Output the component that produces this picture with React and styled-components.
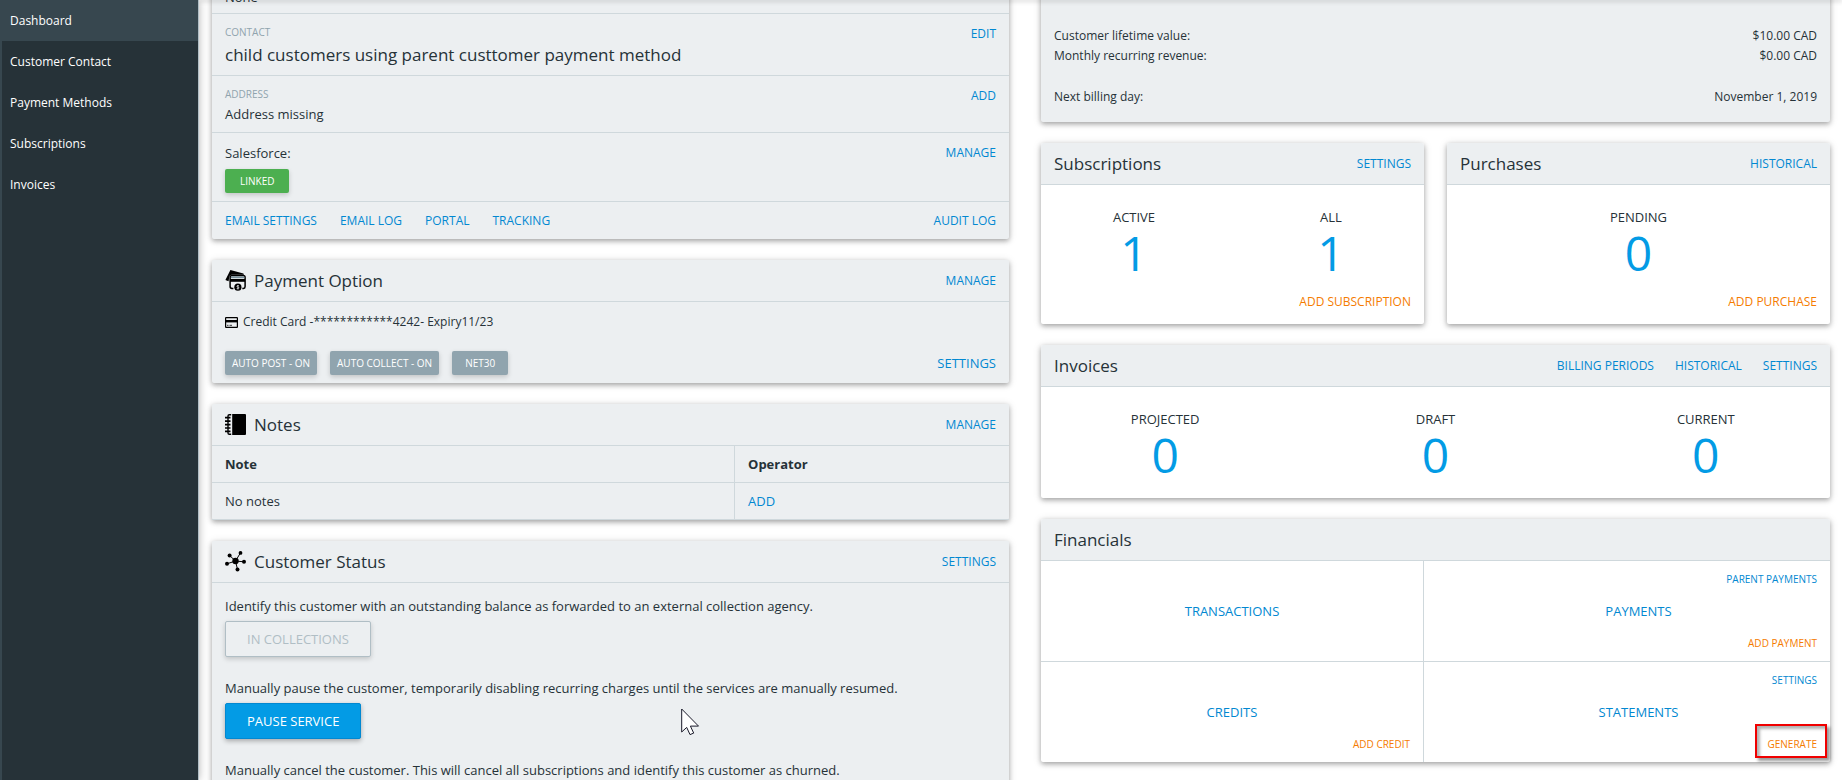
import React from 'react';
import styled, { createGlobalStyle } from 'styled-components';


const menu = ['Dashboard', 'Customer Contact', 'Payment Methods', 'Subscriptions', 'Invoices'];

const summary = [
    [
        { label: 'Customer lifetime value:', value: '$10.00 CAD' },
        { label: 'Monthly recurring revenue:', value: '$0.00 CAD' }
    ],
    [
        { label: 'Next billing day:', value: 'November 1, 2019' }
    ]
];

const invoiceStats = [
    { label: 'PROJECTED', value: 0 },
    { label: 'DRAFT', value: 0 },
    { label: 'CURRENT', value: 0 }
];

const PaymentIcon = () => (
    <HeaderIcon viewBox="0 0 21 21" aria-hidden="true">
        <path d="M5.4 0 18.4 3.6l.6 1.2H6.6Q4.400 5 4.200 7.200L3.600 11.200 2.200 10.800.4 10z" fill="#000" />
        <path d="M7 5.600h11.200q1.900 0 1.900 1.900v9q0 1.800-1.600 1.900h-1.200M8.400 18.400H7q-1.900 0-1.900-1.900v-9q0-1.900 1.900-1.900" fill="none" stroke="#000" strokeWidth="1.500" />
        <path d="M6 6.400h13.300v1.800H6z" fill="#78909c" />
        <path d="M5 9h15v2.800H5z" fill="#000" />
        <circle cx="12.900" cy="17.200" r="3.600" fill="#000" />
        <path d="M14 15.800q-2.400-.6-2.200.5.2.7 1.100.8 1.200.2 1.200 1-.2 1-2.400.5M12.900 15v4.400" fill="none" stroke="#eceff1" strokeWidth=".7" />
    </HeaderIcon>
)

const NotesIcon = () => (
    <HeaderIcon viewBox="0 0 21 21" aria-hidden="true">
        <path d="M7.200 0H20q1 0 1 1v19q0 1-1 1H7.200z" fill="#000" />
        <path d="M6.200.7H4.300Q3 .7 3 2v17q0 1.300 1.300 1.300h1.900" fill="none" stroke="#000" strokeWidth="1.400" />
        <path d="M0 3.700h5.500M0 7.200h5.500M0 10.600h5.500M0 14h5.500M0 17.400h5.500" stroke="#000" strokeWidth="1.700" />
    </HeaderIcon>
)

const StatusIcon = () => (
    <HeaderIcon viewBox="0 0 21 21" aria-hidden="true">
        <path d="M10.500 10 4.600 4.500M10.500 10l4.900-8M10.500 10l8.500.8M10.500 10l2 8.500M10.500 10 2 12.800" stroke="#000" strokeWidth="1" />
        <circle cx="10.500" cy="10" r="3.200" />
        <circle cx="4.600" cy="4.500" r="2" />
        <circle cx="15.500" cy="1.900" r="1.900" />
        <circle cx="19" cy="10.700" r="2" />
        <circle cx="12.500" cy="18.400" r="2" />
        <circle cx="2" cy="12.800" r="2" />
    </HeaderIcon>
)

const CardIcon = () => (
    <SmallIcon viewBox="0 0 13 11" aria-hidden="true">
        <rect x=".6" y=".6" width="11.800" height="9.800" rx=".5" fill="none" stroke="#000" strokeWidth="1.200" />
        <path d="M0 3h13v2.400H0z" />
        <path d="M2 8.300h1.500M4.500 8.300h2.500" stroke="#000" strokeWidth=".8" />
    </SmallIcon>
)

const CardHeader = ({ icon, title, links = [] }) => (
    <Header>
        {icon}
        <Title>{title}</Title>
        <Links>
            {links.map(link => <Link href="#" key={link}>{link}</Link>)}
        </Links>
    </Header>
)

const Stat = ({ label, value }) => (
    <StatBox>
        <StatLabel>{label}</StatLabel>
        <StatValue>{value}</StatValue>
    </StatBox>
)

const FinancialCell = ({ name, top, action, marked }) => (
    <Cell>
        <CellLine $align="flex-end">{top && <SmallLink href="#">{top}</SmallLink>}</CellLine>
        <CellLine $align="center"><BigLink href="#">{name}</BigLink></CellLine>
        <CellLine $align="flex-end">
            {action &&
                <ActionWrap>
                    <SmallLink href="#" $accent>{action}</SmallLink>
                    {marked && <Marker />}
                </ActionWrap>
            }
        </CellLine>
    </Cell>
)

const App = () => {
    return (
        <Page>
            <GlobalStyle />
            <Sidebar>
                {menu.map((item, i) => (
                    <MenuItem href="#" key={item} $active={i === 0}>{item}</MenuItem>
                ))}
            </Sidebar>
            <Main>
                <TopShade />
                <Columns>
                    <Column>
                        <Card>
                            <FirstRow>None</FirstRow>
                            <Row>
                                <div>
                                    <Label>CONTACT</Label>
                                    <ContactName>child customers using parent custtomer payment method</ContactName>
                                </div>
                                <Link href="#">EDIT</Link>
                            </Row>
                            <Row>
                                <div>
                                    <Label>ADDRESS</Label>
                                    <Value>Address missing</Value>
                                </div>
                                <Link href="#">ADD</Link>
                            </Row>
                            <Row>
                                <div>
                                    <Source>Salesforce:</Source>
                                    <Badge type="button" $color="#4caf50" $pad={15}>LINKED</Badge>
                                </div>
                                <Link href="#">MANAGE</Link>
                            </Row>
                            <Footer>
                                <Link href="#">EMAIL SETTINGS</Link>
                                <Link href="#">EMAIL LOG</Link>
                                <Link href="#">PORTAL</Link>
                                <Link href="#">TRACKING</Link>
                                <LastLink href="#">AUDIT LOG</LastLink>
                            </Footer>
                        </Card>

                        <Card>
                            <CardHeader icon={<PaymentIcon />} title="Payment Option" links={['MANAGE']} />
                            <PaymentBody>
                                <PaymentMethod>
                                    <CardIcon />
                                    Credit Card -************4242- Expiry11/23
                                </PaymentMethod>
                                <Badges>
                                    <Badge type="button" $pad={7}>AUTO POST - ON</Badge>
                                    <Badge type="button" $pad={7}>AUTO COLLECT - ON</Badge>
                                    <Badge type="button" $pad={13}>NET30</Badge>
                                    <LastBigLink href="#">SETTINGS</LastBigLink>
                                </Badges>
                            </PaymentBody>
                        </Card>

                        <Card>
                            <CardHeader icon={<NotesIcon />} title="Notes" links={['MANAGE']} />
                            <NotesTable>
                                <thead>
                                    <tr>
                                        <th>Note</th>
                                        <th>Operator</th>
                                    </tr>
                                </thead>
                                <tbody>
                                    <tr>
                                        <td>No notes</td>
                                        <td><BigLink href="#">ADD</BigLink></td>
                                    </tr>
                                </tbody>
                            </NotesTable>
                        </Card>

                        <Card>
                            <CardHeader icon={<StatusIcon />} title="Customer Status" links={['SETTINGS']} />
                            <StatusBody>
                                <Text>Identify this customer with an outstanding balance as forwarded to an external collection agency.</Text>
                                <Button type="button" disabled>IN COLLECTIONS</Button>
                                <Text>Manually pause the customer, temporarily disabling recurring charges until the services are manually resumed.</Text>
                                <Button type="button">PAUSE SERVICE</Button>
                                <Text>Manually cancel the customer. This will cancel all subscriptions and identify this customer as churned.</Text>
                            </StatusBody>
                        </Card>
                    </Column>

                    <Column>
                        <SummaryCard>
                            {summary.map((group, i) => (
                                <div key={i}>
                                    {group.map(row => (
                                        <SummaryRow key={row.label}>
                                            <span>{row.label}</span>
                                            <span>{row.value}</span>
                                        </SummaryRow>
                                    ))}
                                </div>
                            ))}
                        </SummaryCard>

                        <Pair>
                            <Card $white>
                                <CardHeader title="Subscriptions" links={['SETTINGS']} />
                                <Stats $gap={11}>
                                    <Stat label="ACTIVE" value={1} />
                                    <Stat label="ALL" value={1} />
                                </Stats>
                                <AddLine><Link href="#" $accent>ADD SUBSCRIPTION</Link></AddLine>
                            </Card>
                            <Card $white>
                                <CardHeader title="Purchases" links={['HISTORICAL']} />
                                <Stats>
                                    <Stat label="PENDING" value={0} />
                                </Stats>
                                <AddLine><Link href="#" $accent>ADD PURCHASE</Link></AddLine>
                            </Card>
                        </Pair>

                        <Card $white>
                            <CardHeader title="Invoices" links={['BILLING PERIODS', 'HISTORICAL', 'SETTINGS']} />
                            <Stats $gap={22} $bottom={17}>
                                {invoiceStats.map(stat => <Stat key={stat.label} {...stat} />)}
                            </Stats>
                        </Card>

                        <Card $white>
                            <CardHeader title="Financials" />
                            <Financials>
                                <FinancialCell name="TRANSACTIONS" />
                                <FinancialCell name="PAYMENTS" top="PARENT PAYMENTS" action="ADD PAYMENT" />
                                <FinancialCell name="CREDITS" action="ADD CREDIT" />
                                <FinancialCell name="STATEMENTS" top="SETTINGS" action="GENERATE" marked />
                            </Financials>
                        </Card>
                    </Column>
                </Columns>
            </Main>
            <Cursor viewBox="0 0 19 28" aria-hidden="true">
                <path d="M.7 1v23l5-4.600 3.300 7.200 3.700-1.500-3.300-7H17.500z" fill="#fff" stroke="#1a1a2a" strokeWidth="1" />
            </Cursor>
        </Page>
    )
}

export default App;

const GlobalStyle = createGlobalStyle`
    * {
        box-sizing: border-box;
    }
    body {
        margin: 0;
        background: #fff;
        color: #263238;
        font-family: 'Open Sans', 'Noto Sans', sans-serif;
        font-size: 13px;
        line-height: 20px;
    }
    button {
        font-family: inherit;
    }
`

const Page = styled.div`
    display: flex;
    height: 100vh;
    overflow: hidden;
    position: relative;
`

const Sidebar = styled.nav`
    flex: 0 0 199px;
    background: #263238;
    border-left: 2px solid #37474f;
    border-right: 1px solid #b0bec5;
    box-shadow: 0 0 8px rgba(0, 0, 0, .3);
`

const MenuItem = styled.a`
    display: flex;
    align-items: center;
    height: 41px;
    padding: 0 8px;
    font-size: 12px;
    color: #fff;
    text-decoration: none;
    background: ${props => props.$active ? '#37474f' : 'transparent'};
`

const Main = styled.main`
    flex: 1;
    min-width: 0;
    overflow: hidden;
`

const TopShade = styled.div`
    position: relative;
    z-index: 1;
    height: 0;
    box-shadow: 0 0 5px 1px rgba(0, 0, 0, .25);
`

/* scrolled part of the page */
const Columns = styled.div`
    display: grid;
    grid-template-columns: 797fr 789fr;
    gap: 32px;
    align-items: start;
    margin-top: -43px;
    padding: 0 12px 0 13px;
`

const Column = styled.div`
    display: flex;
    flex-direction: column;
    gap: 21px;
    min-width: 0;
`

const Card = styled.section`
    background: ${props => props.$white ? '#fff' : '#eceff1'};
    border-radius: 2px;
    box-shadow: 0 2px 5px rgba(0, 0, 0, .3), 0 1px 10px rgba(0, 0, 0, .12);
`

const Header = styled.header`
    display: flex;
    align-items: center;
    height: 42px;
    padding: 0 13px;
    background: #eceff1;
    border-bottom: 1px solid #cfd8dc;
    border-radius: 2px 2px 0 0;
`

const HeaderIcon = styled.svg`
    width: 21px;
    height: 21px;
    margin-right: 8px;
`

const SmallIcon = styled.svg`
    width: 13px;
    height: 11px;
    margin-right: 5px;
`

const Title = styled.h2`
    margin: 0;
    font-size: 17px;
    font-weight: 400;
    line-height: 24px;
`

const Links = styled.div`
    display: flex;
    gap: 21px;
    margin-left: auto;
`

const Link = styled.a`
    color: ${props => props.$accent ? '#f57c00' : '#0288d1'};
    font-size: 12px;
    line-height: 20px;
    text-decoration: none;
    white-space: nowrap;
`

const LastLink = styled(Link)`
    margin-left: auto;
`

const BigLink = styled(Link)`
    font-size: 13px;
`

const LastBigLink = styled(BigLink)`
    margin-left: auto;
`

const SmallLink = styled(Link)`
    font-size: 10px;
`

const Row = styled.div`
    display: flex;
    justify-content: space-between;
    align-items: flex-start;
    padding: 10px 13px 6px;
    border-bottom: 1px solid #cfd8dc;
`

const FirstRow = styled(Row)`
    align-items: flex-end;
    height: 57px;
`

const Label = styled.div`
    font-size: 10px;
    line-height: 17px;
    color: #90a4ae;
`

const ContactName = styled.div`
    font-size: 17px;
    line-height: 28px;
`

const Value = styled.div`
    line-height: 23px;
`

const Source = styled.div`
    margin-bottom: 6px;
`

const Badge = styled.button`
    display: block;
    height: 24px;
    padding: 0 ${props => props.$pad}px;
    border: none;
    border-radius: 2px;
    background: ${props => props.$color || '#90a4ae'};
    box-shadow: 0 2px 5px rgba(0, 0, 0, .18);
    color: #fff;
    font-size: 10px;
    font-weight: 500;

    ${Source} + & {
        margin-bottom: 2px;
    }
`

const Footer = styled.div`
    display: flex;
    gap: 23px;
    padding: 9px 13px 8px;
`

const PaymentBody = styled.div`
    padding: 10px 13px 8px;
`

const PaymentMethod = styled.div`
    display: flex;
    align-items: center;
    margin-bottom: 19px;
    font-size: 12px;
`

const Badges = styled.div`
    display: flex;
    align-items: center;
    gap: 13px;
`

const NotesTable = styled.table`
    width: 100%;
    table-layout: fixed;
    border-spacing: 0;

    th, td {
        height: 37px;
        padding: 0 13px;
        border-bottom: 1px solid #cfd8dc;
        text-align: left;
    }
    th:first-child {
        width: 65.5%;
    }
    th + th, td + td {
        border-left: 1px solid #cfd8dc;
    }
`

const StatusBody = styled.div`
    padding: 11px 13px;
`

const Text = styled.p`
    margin: 0 0 3px;
    line-height: 24px;
`

const Button = styled.button`
    height: 36px;
    margin-bottom: 19px;
    padding: 0 21px;
    border: 1px solid #0288d1;
    border-radius: 2px;
    background: #039be5;
    box-shadow: 0 2px 5px rgba(0, 0, 0, .3);
    color: #fff;
    font-size: 13px;

    &:disabled {
        border-color: #b0bec5;
        background: #eceff1;
        box-shadow: 0 2px 5px rgba(0, 0, 0, .18);
        color: #b0bec5;
    }
`

const SummaryCard = styled(Card)`
    display: flex;
    flex-direction: column;
    gap: 21px;
    padding: 69px 13px 15px;
    font-size: 12px;
`

const SummaryRow = styled.div`
    display: flex;
    justify-content: space-between;
`

const Pair = styled.div`
    display: grid;
    grid-template-columns: 1fr 1fr;
    gap: 23px;
`

const Stats = styled.div`
    display: grid;
    grid-auto-flow: column;
    grid-auto-columns: 1fr;
    gap: ${props => props.$gap || 0}px;
    padding: 22px 0 ${props => props.$bottom || 13}px;
`

const StatBox = styled.div`
    text-align: center;
`

const StatLabel = styled.div`
    font-size: 13px;
`

const StatValue = styled.div`
    color: #039be5;
    font-size: 48px;
    line-height: 52px;
`

const AddLine = styled.div`
    display: flex;
    justify-content: flex-end;
    padding: 0 13px 12px;
`

const Financials = styled.div`
    display: grid;
    grid-template-columns: 383fr 406fr;
`

const Cell = styled.div`
    display: flex;
    flex-direction: column;
    justify-content: space-between;
    height: 101px;
    padding: 8px 13px 9px;

    &:nth-child(odd) {
        border-right: 1px solid #cfd8dc;
    }
    &:nth-child(even) {
        padding-left: 36px;
    }
    &:nth-child(-n + 2) {
        border-bottom: 1px solid #cfd8dc;
    }
    &:nth-child(n + 3) {
        height: 100px;
    }
`

const CellLine = styled.div`
    display: flex;
    justify-content: ${props => props.$align};
    height: 20px;
`

const ActionWrap = styled.span`
    position: relative;
`

const Marker = styled.span`
    position: absolute;
    inset: -9px -10px -5px -13px;
    border: 2px solid #f00000;
    box-shadow: 3px 3px 3px rgba(0, 0, 0, .4), inset 3px 3px 3px rgba(0, 0, 0, .3);
    pointer-events: none;
`

/* mouse pointer drawn over the page */
const Cursor = styled.svg`
    position: absolute;
    left: 681px;
    top: 708px;
    width: 19px;
    height: 28px;
`
